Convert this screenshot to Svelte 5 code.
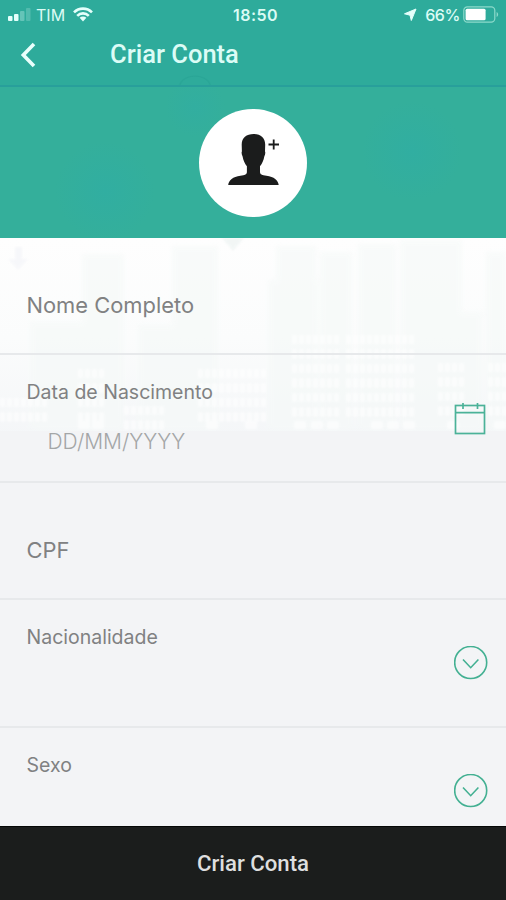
<script>
const fields = [
    { label: 'Nome Completo', kind: 'text' },
    { label: 'Data de Nascimento', kind: 'date', placeholder: 'DD/MM/YYYY' },
    { label: 'CPF', kind: 'text' },
    { label: 'Nacionalidade', kind: 'select' },
    { label: 'Sexo', kind: 'select' }
];

// Skyline behind the form: tall faded towers
const towers = [
    { x: 30, y: 322, w: 52, h: 108 },
    { x: 82, y: 254, w: 42, h: 176 },
    { x: 138, y: 325, w: 56, h: 105 },
    { x: 172, y: 246, w: 46, h: 184 },
    { x: 268, y: 280, w: 50, h: 150 },
    { x: 276, y: 246, w: 40, h: 70 },
    { x: 320, y: 252, w: 32, h: 178 },
    { x: 358, y: 244, w: 38, h: 186 },
    { x: 400, y: 240, w: 62, h: 190 },
    { x: 456, y: 312, w: 26, h: 118 },
    { x: 486, y: 252, w: 20, h: 178 }
];

// Blocks of lit windows at the bottom of the skyline
const blocks = [
    { x: 0, y: 398, cols: 7, rows: 2 },
    { x: 78, y: 369, cols: 4, rows: 4 },
    { x: 124, y: 406, cols: 6, rows: 2 },
    { x: 198, y: 369, cols: 10, rows: 4 },
    { x: 292, y: 335, cols: 7, rows: 6 },
    { x: 346, y: 335, cols: 10, rows: 6 },
    { x: 438, y: 363, cols: 4, rows: 4 },
    { x: 488, y: 363, cols: 3, rows: 4 }
];

const windows = blocks.flatMap(b =>
    Array.from({ length: b.cols * b.rows }, (_, i) => ({
        x: b.x + (i % b.cols) * 7,
        y: b.y + Math.floor(i / b.cols) * 14.5
    }))
);

// Wide openings on the ground floor
const doors = [78, 92, 206, 245, 294, 311, 327, 371, 387, 403, 447, 494];
</script>

<div class="screen">
    <svg class="skyline" viewBox="0 0 506 900" aria-hidden="true">
        <defs>
            <linearGradient id="sky" x1="0" y1="0" x2="0" y2="1">
                <stop offset="0" stop-color="#fefefe" />
                <stop offset="0.5" stop-color="#fbfcfc" />
                <stop offset="1" stop-color="#f4f6f8" />
            </linearGradient>
            <filter id="soft"><feGaussianBlur stdDeviation="1.2" /></filter>
            <filter id="haze"><feGaussianBlur stdDeviation="2.5" /></filter>
        </defs>
        <rect y="238" width="506" height="200" fill="url(#sky)" />
        <g fill="#f5f9f8" opacity="0.6" filter="url(#haze)">
            {#each towers as t}
                <rect x={t.x} y={t.y} width={t.w} height={t.h} />
            {/each}
        </g>
        <g fill="#ffffff" opacity="0.6" filter="url(#soft)">
            {#each windows as w}
                <rect x={w.x} y={w.y} width="5" height="9" />
            {/each}
            {#each doors as x}
                <rect {x} y="421" width="12" height="8" />
            {/each}
        </g>
        <path d="M15 247v12h-7l10 11 10-11h-6v-12z" fill="#f4f5f9" opacity="0.7" filter="url(#soft)" />
        <path d="M222 238h22l-11 13z" fill="#f0f5f4" opacity="0.8" filter="url(#soft)" />
        <rect y="431" width="506" height="469" fill="#f3f4f6" />
    </svg>

    <header>
        <div class="status">
            <div class="carrier">
                <svg class="signal" width="24" height="14" viewBox="0 0 24 14" fill="#e4fffb">
                    <rect x="0" y="8" width="4.5" height="5" rx="1" />
                    <rect x="6" y="6" width="4.5" height="7" rx="1" />
                    <rect x="12" y="3" width="4.5" height="10" rx="1" opacity="0.3" />
                    <rect x="18" y="0" width="4.5" height="13" rx="1" opacity="0.2" />
                </svg>
                <span>TIM</span>
                <svg class="wifi" width="20" height="15" viewBox="0 0 20 15" fill="none" stroke="#e4fffb" stroke-width="2.6">
                    <path d="M1 5.4a12.7 12.7 0 0 1 18 0" />
                    <path d="M4.2 8.8a8.2 8.2 0 0 1 11.6 0" />
                    <path d="M10 14.4l-3.4-3.6a4.8 4.8 0 0 1 6.8 0z" fill="#e4fffb" stroke="none" />
                </svg>
            </div>
            <span class="clock">18:50</span>
            <div class="power">
                <svg class="location" width="14" height="14" viewBox="0 0 14 14">
                    <path d="M13 1L8.3 12.5 7 7.2 1.500 5.800z" fill="#e4fffb" stroke="#e4fffb" />
                </svg>
                <span>66%</span>
                <svg class="battery" width="36" height="17" viewBox="0 0 36 17">
                    <rect x="0.8" y="0.8" width="31" height="15.4" rx="3.6" fill="none" stroke="#8ddacb" stroke-width="1.2" />
                    <rect x="2.6" y="2.8" width="20" height="11.4" rx="1.5" fill="#fff" />
                    <path d="M33.6 6v5c2-.8 2-4.2 0-5z" fill="#8ddacb" />
                </svg>
            </div>
        </div>
        <div class="nav">
            <button class="back" aria-label="Voltar">
                <svg width="16" height="26" viewBox="0 0 16 26">
                    <path d="M14 2L3.3 13 14 24" fill="none" stroke="#e9fffc" stroke-width="3.6" />
                </svg>
            </button>
            <h1>Criar Conta</h1>
        </div>
    </header>

    <section class="hero">
        <button class="avatar" aria-label="Adicionar foto">
            <svg width="108" height="108" viewBox="0 0 108 108">
                <path
                    d="M54.7 25c7.3 0 11.5 4 11.5 10.500l-.2 7c.6.700.3 3-.7 5-.6 4-2.200 7-4.300 9.800v5.700c0 2.500 2 3.200 6.500 3.700 7.500 1 11.700 4.300 12.200 9.300h-50.500c.5-5 4.700-8.300 12.200-9.300 4.500-.5 6.500-1.200 6.500-3.700v-5.700c-2.100-2.800-3.700-5.800-4.300-9.800-1-2-1.300-4.300-.7-5l-.2-7c0-6.500 4.700-10.500 12-10.500z"
                    fill="#1b1c1c"
                />
                <path d="M69.5 35.5h10.5M74.7 30.500v10" stroke="#1b1c1c" stroke-width="1.8" />
            </svg>
        </button>
    </section>

    <form>
        {#each fields as field}
            <div class="field {field.kind}">
                <div class="text-box">
                    <span class="label">{field.label}</span>
                    {#if field.placeholder}
                        <span class="placeholder">{field.placeholder}</span>
                    {/if}
                </div>
                {#if field.kind === 'date'}
                    <svg class="icon" width="34" height="34" viewBox="0 0 34 34" fill="none" stroke="#4bb298" stroke-width="1.7">
                        <rect x="1.5" y="4.5" width="29" height="28" />
                        <path d="M1.5 11.700h29M9 2v6M23.5 2v6" />
                    </svg>
                {:else if field.kind === 'select'}
                    <svg class="icon" width="34" height="34" viewBox="0 0 34 34" fill="none" stroke="#43b092" stroke-width="1.6">
                        <circle cx="16.7" cy="16.5" r="16" />
                        <path d="M9 13.5l7.7 8.2 7.7-8.2" />
                    </svg>
                {/if}
            </div>
        {/each}
    </form>

    <button class="submit">Criar Conta</button>
</div>

<style>
    :global(body) {
        margin: 0;
    }

    .screen {
        position: relative;
        display: flex;
        flex-direction: column;
        width: 506px;
        height: 900px;
        overflow: hidden;
        background: #f3f4f6;
        font-family: Roboto, sans-serif;
    }

    .skyline {
        position: absolute; /* sits behind the whole form */
        inset: 0;
    }

    button {
        padding: 0;
        border: none;
        font-family: inherit;
        cursor: pointer;
    }

    header,
    .hero,
    form,
    .submit {
        position: relative;
        flex: none;
        box-sizing: border-box;
    }

    header {
        height: 87px;
        background: radial-gradient(ellipse 17px 12px at 195px 87px, transparent 82%, #29a596 90%, transparent 100%) #2eab9b;
        border-bottom: 2px solid #289f9b;
    }

    .status {
        display: grid;
        grid-template-columns: 1fr auto 1fr;
        align-items: center;
        height: 29px;
        padding: 0 7px 0 8px;
        color: #dcfbf5;
        font-family: Inter, sans-serif;
        font-size: 16px;
    }

    .carrier,
    .power {
        display: flex;
        align-items: center;
    }

    .signal {
        margin-right: 4px;
    }

    .wifi {
        margin-left: 8px;
    }

    .clock {
        padding-left: 4px;
        font-weight: 600;
        letter-spacing: 0.5px;
    }

    .power {
        justify-content: flex-end;
    }

    .location {
        margin-right: 8px;
    }

    .power span {
        font-weight: 500;
        letter-spacing: -0.4px;
    }

    .battery {
        margin-left: 3px;
    }

    .nav {
        display: flex;
        align-items: center;
        height: 51px;
        padding-left: 20px;
    }

    .back {
        display: flex;
        width: 90px;
        background: none;
    }

    h1 {
        margin: 0;
        padding-bottom: 1px;
        color: #dcfcf6;
        font-size: 25.5px;
        font-weight: 500;
    }

    .hero {
        display: flex;
        justify-content: center;
        height: 151px;
        padding-top: 22px;
        background:
            radial-gradient(circle at 105px 104px, #31aea1 0, transparent 50px),
            radial-gradient(circle at 412px 64px, #31aea1 0, transparent 50px),
            radial-gradient(circle at 195px 20px, #32aea0 0, transparent 30px),
            #34af9b;
    }

    .avatar {
        width: 108px;
        height: 108px;
        border-radius: 50%;
        background: #fff;
    }

    form {
        display: flex;
        flex-direction: column;
        height: 588px;
        overflow: hidden;
    }

    .field {
        display: flex;
        flex: none;
        justify-content: space-between;
        box-sizing: border-box;
        height: 128px;
        padding: 25px 18px 0 26.5px;
        border-bottom: 2px solid #e7e9eb;
        color: #808182;
        font-family: Inter, sans-serif;
        font-size: 19.5px;
    }

    .field.text {
        align-items: center;
        height: 117px;
        padding-top: 18px;
        font-size: 21.9px;
    }

    .text-box {
        display: flex;
        flex-direction: column;
    }

    .placeholder {
        margin: 25px 0 0 21px;
        color: #a4a6a7;
        font-size: 21px;
        font-weight: 300;
    }

    .icon {
        margin-top: 20.5px;
    }

    .submit {
        height: 74px;
        padding-bottom: 2px;
        border-top: 1px solid #050706;
        background: #1b1d1c;
        color: #dedfdf;
        font-size: 22.2px;
        font-weight: 500;
    }
</style>
